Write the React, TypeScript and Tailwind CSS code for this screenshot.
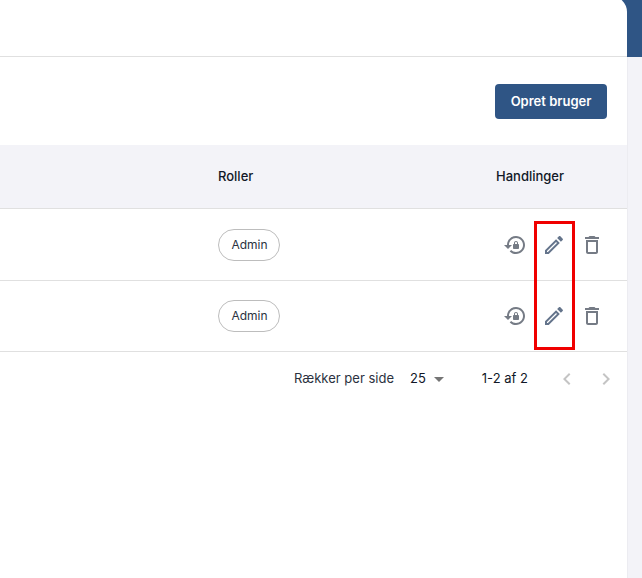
const resetPath =
  'M13 3c-4.97 0-9 4.03-9 9H1l4 4 4-4H6c0-3.86 3.14-7 7-7s7 3.14 7 7-3.14 7-7 7c-1.9 0-3.62-.76-4.88-1.99L6.7 18.42C8.32 20.01 10.55 21 13 21c4.97 0 9-4.03 9-9s-4.03-9-9-9zm2 8v-1c0-1.1-.9-2-2-2s-2 .9-2 2v1c-.55 0-1 .45-1 1v3c0 .55.45 1 1 1h4c.55 0 1-.45 1-1v-3c0-.55-.45-1-1-1zm-1 0h-2v-1c0-.55.45-1 1-1s1 .45 1 1v1z'
const editPath =
  'M3 17.25V21h3.75L17.81 9.94l-3.75-3.75L3 17.25zM5.92 19H5v-.92l9.06-9.06.92.92L5.92 19zM20.71 5.63l-2.34-2.34c-.2-.2-.45-.29-.71-.29s-.51.1-.7.29l-1.83 1.83 3.75 3.75 1.83-1.83c.39-.39.39-1.02 0-1.41z'
const deletePath =
  'M6 19c0 1.1.9 2 2 2h8c1.1 0 2-.9 2-2V7H6v12zM8 9h8v10H8V9zm7.5-5l-1-1h-5l-1 1H5v2h14V4z'

function Icon({ d, className }: { d: string; className: string }) {
  return (
    <svg viewBox="0 0 24 24" fill="currentColor" className={className}>
      <path d={d} />
    </svg>
  )
}

function UserRow({ height }: { height: string }) {
  return (
    <div className={`flex items-center border-b border-[#e0e0e0] ${height}`}>
      <div className="w-[218px]" />
      <div className="w-[278px]">
        <span className="inline-flex h-[32px] w-[62px] items-center justify-center rounded-full border border-[#bdbdbd] pl-px text-[12px] text-[#2b3240]">
          Admin
        </span>
      </div>
      <div className="flex">
        <button className="flex w-[38.5px] justify-center text-[#757b85]">
          <Icon d={resetPath} className="h-6 w-6" />
        </button>
        <button className="flex w-[38.5px] justify-center text-[#64748b]">
          <Icon d={editPath} className="h-6 w-6" />
        </button>
        <button className="flex w-[38.5px] justify-center text-[#757b85]">
          <Icon d={deletePath} className="h-6 w-6" />
        </button>
      </div>
    </div>
  )
}

export default function App() {
  return (
    <div className="h-[578px] w-[642px] overflow-hidden bg-white font-['Inter',sans-serif] text-[#111827]">
      {/* Top bar, the card's rounded corner starts just above the visible area */}
      <div className="h-[57px] overflow-hidden bg-[#2f5585]">
        <div className="-mt-[4px] h-[61px] w-[627px] rounded-tr-[16px] border-b border-[#e0e0e0] bg-white" />
      </div>

      <div className="flex h-[521px]">
        <div className="w-[628px] border-r border-[#ececf1] bg-white">
          <div className="flex h-[88px] items-start justify-end pt-[27px] pr-[20px]">
            <button className="h-[35px] w-[112px] rounded-[4px] bg-[#2f5585] text-[13px] font-semibold text-white">
              Opret bruger
            </button>
          </div>

          <div className="relative">
            <div className="flex h-[64px] items-center border-b border-[#e0e0e0] bg-[#f3f3f8] text-[13px] font-medium text-[#111827]">
              <div className="w-[218px]" />
              <div className="w-[278px]">Roller</div>
              <div>Handlinger</div>
            </div>
            <UserRow height="h-[72px]" />
            <UserRow height="h-[71px]" />

            {/* Red annotation box */}
            <div className="absolute top-[76px] left-[534px] h-[129px] w-[41px] border-[3px] border-[#f00000]" />
          </div>

          <div className="flex h-[54px] items-center text-[13px] text-[#2b3240]">
            <span className="ml-[294px]">Rækker per side</span>
            <span className="ml-[16px] text-[#111827]">25</span>
            <Icon d="M7 10l5 5 5-5z" className="ml-[1px] h-6 w-6 text-[#757575]" />
            <span className="ml-[31px] text-[#111827]">1-2 af 2</span>
            <Icon
              d="M15.41 7.41 14 6l-6 6 6 6 1.41-1.41L10.83 12z"
              className="ml-[27px] h-6 w-6 text-[#c4c4c4]"
            />
            <Icon
              d="M10 6 8.59 7.41 13.17 12l-4.58 4.59L10 18l6-6z"
              className="ml-[15px] h-6 w-6 text-[#c4c4c4]"
            />
          </div>
        </div>
        <div className="flex-1 bg-[#f3f3f8]" />
      </div>
    </div>
  )
}
